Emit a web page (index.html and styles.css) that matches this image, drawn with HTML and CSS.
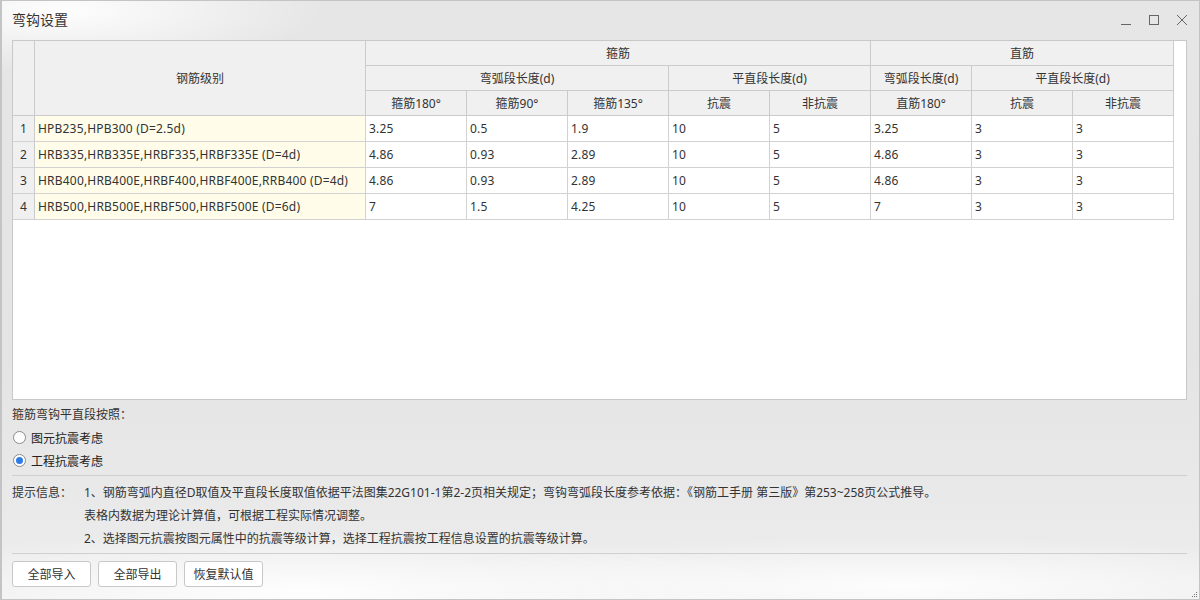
FILE: index.html
```html
<!DOCTYPE html>
<html lang="zh">
<head>
<meta charset="utf-8">
<title>弯钩设置</title>
<link rel="stylesheet" href="styles.css">
</head>
<body>
<div class="window">
  <div class="titlebar">
    <div class="title">弯钩设置</div>
    <div class="controls">
      <svg class="ctl" width="12" height="12" viewBox="0 0 12 12"><path d="M1 10.5h10" stroke="#666" stroke-width="1" fill="none"/></svg>
      <svg class="ctl" width="12" height="12" viewBox="0 0 12 12"><rect x="1.5" y="1.5" width="9" height="9" stroke="#666" stroke-width="1" fill="none"/></svg>
      <svg class="ctl" width="12" height="12" viewBox="0 0 12 12"><path d="M1 1L11 11M11 1L1 11" stroke="#666" stroke-width="1" fill="none"/></svg>
    </div>
  </div>
  <div class="grid-box">
    <table class="grid">
      <colgroup>
        <col class="c-num"><col class="c-name">
        <col class="c-val"><col class="c-val"><col class="c-val"><col class="c-val"><col class="c-val"><col class="c-val"><col class="c-val"><col class="c-val">
      </colgroup>
      <thead>
        <tr>
          <th rowspan="3"></th>
          <th rowspan="3">钢筋级别</th>
          <th colspan="5">箍筋</th>
          <th colspan="3">直筋</th>
        </tr>
        <tr>
          <th colspan="3">弯弧段长度(d)</th>
          <th colspan="2">平直段长度(d)</th>
          <th>弯弧段长度(d)</th>
          <th colspan="2">平直段长度(d)</th>
        </tr>
        <tr>
          <th>箍筋180°</th><th>箍筋90°</th><th>箍筋135°</th><th>抗震</th><th>非抗震</th><th>直筋180°</th><th>抗震</th><th>非抗震</th>
        </tr>
      </thead>
      <tbody>
        <tr><td class="num">1</td><td class="name">HPB235,HPB300 (D=2.5d)</td><td>3.25</td><td>0.5</td><td>1.9</td><td>10</td><td>5</td><td>3.25</td><td>3</td><td>3</td></tr>
        <tr><td class="num">2</td><td class="name">HRB335,HRB335E,HRBF335,HRBF335E (D=4d)</td><td>4.86</td><td>0.93</td><td>2.89</td><td>10</td><td>5</td><td>4.86</td><td>3</td><td>3</td></tr>
        <tr><td class="num">3</td><td class="name">HRB400,HRB400E,HRBF400,HRBF400E,RRB400 (D=4d)</td><td>4.86</td><td>0.93</td><td>2.89</td><td>10</td><td>5</td><td>4.86</td><td>3</td><td>3</td></tr>
        <tr><td class="num">4</td><td class="name">HRB500,HRB500E,HRBF500,HRBF500E (D=6d)</td><td>7</td><td>1.5</td><td>4.25</td><td>10</td><td>5</td><td>7</td><td>3</td><td>3</td></tr>
      </tbody>
    </table>
  </div>
  <div class="options">
    <div class="opt-label">箍筋弯钩平直段按照：</div>
    <label class="radio"><span class="dot"></span>图元抗震考虑</label>
    <label class="radio"><span class="dot on"></span>工程抗震考虑</label>
  </div>
  <div class="hints">
    <div class="hint-label">提示信息：</div>
    <div class="hint-lines">
      <div>1、钢筋弯弧内直径D取值及平直段长度取值依据平法图集22G101-1第2-2页相关规定；弯钩弯弧段长度参考依据：《钢筋工手册 第三版》第253~258页公式推导。</div>
      <div>表格内数据为理论计算值，可根据工程实际情况调整。</div>
      <div>2、选择图元抗震按图元属性中的抗震等级计算，选择工程抗震按工程信息设置的抗震等级计算。</div>
    </div>
  </div>
  <div class="buttons">
    <button class="btn">全部导入</button>
    <button class="btn">全部导出</button>
    <button class="btn">恢复默认值</button>
  </div>
  <svg class="grip" width="6" height="6" viewBox="0 0 6 6"><rect x="4" y="0" width="1" height="1" fill="#777"/><rect x="2" y="2" width="1" height="1" fill="#777"/><rect x="4" y="2" width="1" height="1" fill="#777"/><rect x="0" y="4" width="1" height="1" fill="#777"/><rect x="2" y="4" width="1" height="1" fill="#777"/><rect x="4" y="4" width="1" height="1" fill="#777"/></svg>
</div>
</body>
</html>
```
FILE: styles.css
```css
html, body {
  margin: 0;
  padding: 0;
}
body {
  width: 1200px;
  height: 600px;
  overflow: hidden;
  font-family: "Noto Sans", "Noto Sans CJK SC", sans-serif;
  font-size: 12px;
  color: #333;
}
.window {
  position: relative;
  box-sizing: border-box;
  width: 1200px;
  height: 600px;
  border: 1px solid #c4c4c4;
  border-left-width: 2px;
  background:
    radial-gradient(ellipse 260px 60px at 60px 10px, rgba(255,255,255,0.95), rgba(255,255,255,0) 100%),
    radial-gradient(ellipse 500px 60px at 300px 590px, rgba(255,255,255,0.95), rgba(255,255,255,0) 100%),
    radial-gradient(ellipse 500px 50px at 900px 585px, rgba(255,255,255,0.9), rgba(255,255,255,0) 100%),
    linear-gradient(180deg, #e6e6e6 0%, #e4e4e4 60%, #ededed 100%);
  padding: 0 10px 0 10px;
}
.titlebar {
  height: 39px;
  display: flex;
  align-items: center;
  justify-content: space-between;
}
.title {
  font-size: 14px;
  color: #333;
  margin-top: -3px;
}
.controls {
  display: flex;
  gap: 16px;
  margin-right: 1px;
  margin-top: -1px;
}
.ctl {
  display: block;
}
.grid-box {
  box-sizing: border-box;
  width: 1175px;
  height: 360px;
  background: #fff;
  border: 1px solid #c8c8c8;
}
.grid {
  border-collapse: separate;
  border-spacing: 0;
  table-layout: fixed;
  width: 1160px;
}
.c-num { width: 22px; }
.c-name { width: 331px; }
.c-val { width: 101px; }
.grid th, .grid td {
  box-sizing: border-box;
  border-right: 1px solid #d2d2d2;
  border-bottom: 1px solid #d2d2d2;
  padding: 0 3px;
  white-space: nowrap;
  overflow: hidden;
  font-weight: normal;
}
.grid th {
  background: #f0f0f0;
  height: 25px;
  text-align: center;
  color: #333;
  border-color: #cbcbcb;
}
.grid td {
  height: 26px;
  text-align: left;
  color: #333;
  letter-spacing: 0.2px;
}
.grid td.num {
  background: #f0f0f0;
  text-align: center;
  padding: 0;
  border-right-color: #cbcbcb;
}
.grid td.name {
  background: #fffde9;
}
.options {
  padding-top: 3px;
  display: flex;
  flex-direction: column;
}
.opt-label {
  height: 23px;
  line-height: 23px;
}
.radio {
  display: flex;
  align-items: center;
  height: 23px;
  color: #222;
}
.dot {
  box-sizing: border-box;
  width: 13px;
  height: 13px;
  border: 1px solid #8a8a8a;
  border-radius: 50%;
  background: #fff;
  margin: 0 5px 0 1px;
  display: flex;
  align-items: center;
  justify-content: center;
}
.dot.on::after {
  content: "";
  width: 7px;
  height: 7px;
  border-radius: 50%;
  background: #2d7be5;
}
.hints {
  margin-top: 3px;
  border-top: 1px solid #cfcfcf;
  padding-top: 5px;
  display: flex;
  width: 1175px;
  box-sizing: border-box;
}
.hint-label {
  width: 72px;
  height: 23px;
  line-height: 23px;
}
.hint-lines div {
  height: 23px;
  line-height: 23px;
}
.buttons {
  margin-top: 3px;
  border-top: 1px solid #cfcfcf;
  width: 1175px;
  padding-top: 7px;
  display: flex;
  gap: 7px;
}
.btn {
  box-sizing: border-box;
  height: 26px;
  width: 79px;
  padding: 0;
  font-family: "Noto Sans", "Noto Sans CJK SC", sans-serif;
  font-size: 12px;
  color: #333;
  background: #fff;
  border: 1px solid #c8c8c8;
  border-radius: 3px;
}
.grip {
  position: absolute;
  right: 1px;
  bottom: 1px;
}
```
